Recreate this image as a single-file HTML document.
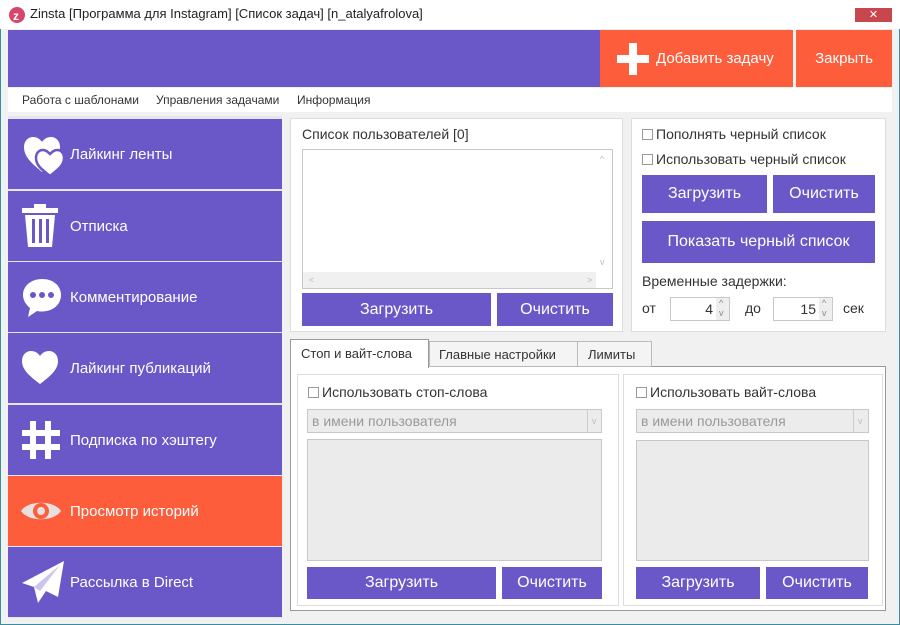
<!DOCTYPE html>
<html><head><meta charset="utf-8"><style>
*{box-sizing:border-box;margin:0;padding:0}
body{width:900px;height:625px;background:#fff;font-family:"Liberation Sans","DejaVu Sans",sans-serif;position:relative;overflow:hidden;color:#333}
.a{position:absolute}
.win{left:0;top:0;width:900px;height:625px;border:1px solid #3a8ca0;background:#f1f1f1}
.pur{background:#6a57c8;color:#fff}
.org{background:#fe5d3c;color:#fff}
.btn{position:absolute;background:#6a57c8;color:#fff;font-size:16px;display:flex;align-items:center;justify-content:center}
.side{position:absolute;left:8px;width:274px;height:70px;display:flex;align-items:center;color:#fff;font-size:15px}
.side svg{position:absolute;left:12px}
.side span{position:absolute;left:62px}
.grp{position:absolute;background:#fff;border:1px solid #ddd}
.t{position:absolute;font-size:14px;color:#333;white-space:nowrap}
.cb{display:inline-block;width:11px;height:11px;border:1px solid #999;background:#fff;margin-right:3px;vertical-align:-1px}
.box{position:absolute;border:1px solid #c8c8c8}
.sm{position:absolute;font-size:9px;color:#bbb;line-height:9px}
</style></head><body>
<div class="a win"></div>
<div class="a" style="left:0;top:0;width:900px;height:29px;background:#fff"></div>
<svg class="a" style="left:9px;top:7px" width="16" height="16"><circle cx="8" cy="8" r="8" fill="#d8446a"/><text x="4" y="13" font-size="12" font-weight="bold" fill="#fff" font-family="Liberation Sans">z</text></svg>
<div class="t" style="left:30px;top:6px;font-size:13px;color:#222">Zinsta [Программа для Instagram] [Список задач] [n_atalyafrolova]</div>
<div class="a" style="left:855px;top:8px;width:37px;height:14px;background:#c8474d;color:#fff;font-size:11px;text-align:center;line-height:14px">✕</div>
<div class="a pur" style="left:8px;top:30px;width:592px;height:57px"></div>
<div class="a org" style="left:600px;top:30px;width:193px;height:57px"></div>
<svg class="a" style="left:617px;top:43px" width="32" height="32"><rect x="12" y="0" width="8" height="32" fill="#fff"/><rect x="0" y="12" width="32" height="8" fill="#fff"/></svg>
<div class="t" style="left:656px;top:50px;color:#fff;font-size:15px">Добавить задачу</div>
<div class="a org" style="left:796px;top:30px;width:96px;height:57px;font-size:15px;display:flex;align-items:center;justify-content:center">Закрыть</div>
<div class="a" style="left:8px;top:88px;width:884px;height:24px;background:#fff"></div>
<div class="t" style="left:22px;top:93px;font-size:12px">Работа с шаблонами</div>
<div class="t" style="left:156px;top:93px;font-size:12px">Управления задачами</div>
<div class="t" style="left:297px;top:93px;font-size:12px">Информация</div>
<div class="a" style="left:8px;top:116px;width:274px;height:502px;background:#e6e6ee"></div>
<div class="side pur" style="top:119px"><svg width="50" height="44" viewBox="0 0 50 44"><path d="M22 40C10 30 4 24 4 15 4 9 8 5 13 5 17 5 20 7 22 10 24 7 27 5 31 5 36 5 40 9 40 15 40 24 34 30 22 40Z" fill="#fff"/><path d="M30 44C21 37 16 33 16 26 16 21 19 18 23 18 26 18 28 20 30 22 32 20 34 18 37 18 41 18 44 21 44 26 44 33 39 37 30 44Z" fill="#fff" stroke="#6a57c8" stroke-width="2.5"/></svg><span>Лайкинг ленты</span></div>
<div class="side pur" style="top:191px"><svg width="40" height="46" viewBox="0 0 40 46"><rect x="2" y="5" width="36" height="5" fill="#fff"/><rect x="14" y="1" width="12" height="4" fill="#fff"/><path d="M5 12h30l-3 32H8Z" fill="#fff"/><rect x="12" y="16" width="3" height="24" fill="#6a57c8"/><rect x="19" y="16" width="3" height="24" fill="#6a57c8"/><rect x="26" y="16" width="3" height="24" fill="#6a57c8"/></svg><span>Отписка</span></div>
<div class="side pur" style="top:262px"><svg width="44" height="44" viewBox="0 0 44 44"><path d="M22 4C11 4 3 11 3 20c0 5 3 10 7 13l-2 9 9-6c2 .5 3 .5 5 .5 11 0 19-7 19-16.5S33 4 22 4Z" fill="#fff"/><circle cx="13" cy="20" r="3" fill="#6a57c8"/><circle cx="22" cy="20" r="3" fill="#6a57c8"/><circle cx="31" cy="20" r="3" fill="#6a57c8"/></svg><span>Комментирование</span></div>
<div class="side pur" style="top:333px"><svg width="40" height="40" viewBox="0 0 40 40"><path d="M20 36C8 27 2 21 2 13 2 7 6 3 11 3 15 3 18 5 20 8 22 5 25 3 29 3 34 3 38 7 38 13 38 21 32 27 20 36Z" fill="#fff"/></svg><span>Лайкинг публикаций</span></div>
<div class="side pur" style="top:405px"><svg width="42" height="42" viewBox="0 0 42 42"><rect x="10" y="2" width="6" height="38" fill="#fff"/><rect x="25" y="2" width="6" height="38" fill="#fff"/><rect x="2" y="11" width="38" height="6" fill="#fff"/><rect x="2" y="25" width="38" height="6" fill="#fff"/></svg><span>Подписка по хэштегу</span></div>
<div class="side org" style="top:476px"><svg width="42" height="30" viewBox="0 0 42 30"><path d="M1 15C8 4 34 4 41 15 34 26 8 26 1 15Z" fill="#e8e0e0"/><circle cx="21" cy="15" r="8" fill="#fe5d3c"/><circle cx="21" cy="15" r="4" fill="#e8e0e0"/></svg><span>Просмотр историй</span></div>
<div class="side pur" style="top:547px"><svg width="46" height="46" viewBox="0 0 46 46"><path d="M44 2 2 24l12 4 4 16 8-12 12 6Z" fill="#fff"/><path d="M14 28 40 6 20 32Z" fill="#6a57c8" opacity=".35"/></svg><span>Рассылка в Direct</span></div>

<div class="grp" style="left:290px;top:118px;width:333px;height:214px"></div>
<div class="t" style="left:302px;top:126px">Список пользователей [0]</div>
<div class="box" style="left:302px;top:149px;width:311px;height:140px;background:#fff"></div>
<div class="a" style="left:303px;top:272px;width:293px;height:16px;background:#f0f0f0"></div>
<div class="sm" style="left:600px;top:155px">^</div><div class="sm" style="left:600px;top:258px">v</div>
<div class="sm" style="left:309px;top:276px">&lt;</div><div class="sm" style="left:587px;top:276px">&gt;</div>
<div class="btn" style="left:302px;top:293px;width:189px;height:33px">Загрузить</div>
<div class="btn" style="left:497px;top:293px;width:116px;height:33px">Очистить</div>

<div class="grp" style="left:631px;top:118px;width:255px;height:214px"></div>
<div class="t" style="left:642px;top:126px"><i class="cb"></i>Пополнять черный список</div>
<div class="t" style="left:642px;top:151px"><i class="cb"></i>Использовать черный список</div>
<div class="btn" style="left:642px;top:175px;width:125px;height:38px">Загрузить</div>
<div class="btn" style="left:773px;top:175px;width:102px;height:38px">Очистить</div>
<div class="btn" style="left:642px;top:221px;width:233px;height:42px">Показать черный список</div>
<div class="t" style="left:642px;top:273px">Временные задержки:</div>
<div class="t" style="left:642px;top:300px">от</div>
<div class="box" style="left:670px;top:297px;width:60px;height:24px;background:#fff;font-size:14px;text-align:right;padding:3px 16px 0 0">4</div>
<div class="a" style="left:716px;top:298px;width:13px;height:22px;background:#eee"></div>
<div class="sm" style="left:719px;top:299px;color:#888">^</div><div class="sm" style="left:719px;top:309px;color:#888">v</div>
<div class="t" style="left:745px;top:300px">до</div>
<div class="box" style="left:773px;top:297px;width:60px;height:24px;background:#fff;font-size:14px;text-align:right;padding:3px 16px 0 0">15</div>
<div class="a" style="left:819px;top:298px;width:13px;height:22px;background:#eee"></div>
<div class="sm" style="left:822px;top:299px;color:#888">^</div><div class="sm" style="left:822px;top:309px;color:#888">v</div>
<div class="t" style="left:843px;top:300px">сек</div>

<div class="a" style="left:290px;top:366px;width:596px;height:245px;border:1px solid #999;background:#fff"></div>
<div class="a" style="left:290px;top:339px;width:139px;height:29px;background:#fff;border:1px solid #999;border-bottom:none"></div>
<div class="a" style="left:429px;top:341px;width:149px;height:26px;background:#f4f4f4;border:1px solid #bbb"></div>
<div class="a" style="left:577px;top:341px;width:75px;height:26px;background:#f4f4f4;border:1px solid #bbb"></div>
<div class="t" style="left:301px;top:346px;font-size:13px">Стоп и вайт-слова</div>
<div class="t" style="left:439px;top:347px;font-size:13px">Главные настройки</div>
<div class="t" style="left:588px;top:347px;font-size:13px">Лимиты</div>

<div class="grp" style="left:297px;top:374px;width:322px;height:232px"></div>
<div class="grp" style="left:623px;top:374px;width:260px;height:232px"></div>
<div class="t" style="left:308px;top:384px"><i class="cb"></i>Использовать стоп-слова</div>
<div class="t" style="left:636px;top:384px"><i class="cb"></i>Использовать вайт-слова</div>
<div class="box" style="left:307px;top:409px;width:295px;height:24px;background:#ececec;font-size:14px;color:#999;padding:3px 4px">в имени пользователя</div>
<div class="a" style="left:587px;top:410px;width:1px;height:22px;background:#ccc"></div><div class="sm" style="left:592px;top:417px">v</div>
<div class="box" style="left:636px;top:409px;width:233px;height:24px;background:#ececec;font-size:14px;color:#999;padding:3px 4px">в имени пользователя</div>
<div class="a" style="left:853px;top:410px;width:1px;height:22px;background:#ccc"></div><div class="sm" style="left:858px;top:417px">v</div>
<div class="box" style="left:307px;top:439px;width:295px;height:122px;background:#ebebeb"></div>
<div class="box" style="left:636px;top:440px;width:233px;height:121px;background:#ebebeb"></div>
<div class="btn" style="left:307px;top:567px;width:189px;height:32px">Загрузить</div>
<div class="btn" style="left:502px;top:567px;width:100px;height:32px">Очистить</div>
<div class="btn" style="left:636px;top:567px;width:124px;height:32px">Загрузить</div>
<div class="btn" style="left:766px;top:567px;width:102px;height:32px">Очистить</div>
</body></html>
